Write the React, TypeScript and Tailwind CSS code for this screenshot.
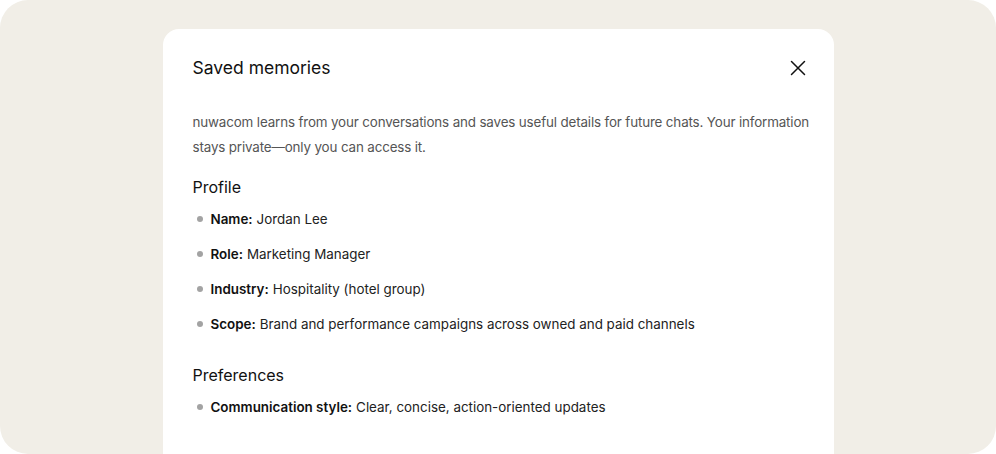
import React from 'react';

type Memory = { label: string; value: string };

const profile: Memory[] = [
  { label: 'Name:', value: 'Jordan Lee' },
  { label: 'Role:', value: 'Marketing Manager' },
  { label: 'Industry:', value: 'Hospitality (hotel group)' },
  { label: 'Scope:', value: 'Brand and performance campaigns across owned and paid channels' },
];

const preferences: Memory[] = [
  { label: 'Communication style:', value: 'Clear, concise, action-oriented updates' },
];

const MemoryList: React.FC<{ items: Memory[] }> = ({ items }) => (
  <ul className="flex flex-col gap-[15px]">
    {items.map((item) => (
      <li key={item.label} className="flex items-center h-[20px] text-[13.4px] text-[#222]">
        <span className="w-[6px] h-[6px] rounded-full bg-[#a3a3a3] ml-[4px] mr-[8px]" />
        <span className="font-semibold text-[#111]">{item.label}</span>
        <span className="ml-[4px]">{item.value}</span>
      </li>
    ))}
  </ul>
);

const App: React.FC = () => {
  return (
    <div className="w-[996px] h-[454px] bg-white" style={{ fontFamily: 'Inter, "Liberation Sans", sans-serif' }}>
      <div className="w-full h-full bg-[#f1eee7] rounded-[28px] overflow-hidden flex justify-center pt-[29px]">
        <div className="w-[671px] h-[460px] bg-white rounded-[16px] pl-[30px] pr-[24px] pt-[27px]">
          <header className="flex items-center justify-between h-[24px]">
            <h2 className="text-[17.5px] text-[#111]">Saved memories</h2>
            <button className="w-[24px] h-[24px] flex items-center justify-center text-[#111]" aria-label="Close">
              <svg width="16" height="16" viewBox="0 0 16 16" fill="none" stroke="currentColor" strokeWidth="1.5" strokeLinecap="round">
                <path d="M1.5 1.5l13 13M14.5 1.5l-13 13" />
              </svg>
            </button>
          </header>

          <p className="mt-[30px] text-[13.4px] leading-[25px] tracking-[-0.15px] text-[#555] whitespace-nowrap">
            nuwacom learns from your conversations and saves useful details for future chats. Your information
            <br />
            stays private—only you can access it.
          </p>

          <h3 className="mt-[15px] text-[16px] leading-[24px] text-[#111]">Profile</h3>
          <div className="mt-[10px]">
            <MemoryList items={profile} />
          </div>

          <h3 className="mt-[29px] text-[16px] leading-[24px] text-[#111]">Preferences</h3>
          <div className="mt-[10px]">
            <MemoryList items={preferences} />
          </div>
        </div>
      </div>
    </div>
  );
};

export default App;
